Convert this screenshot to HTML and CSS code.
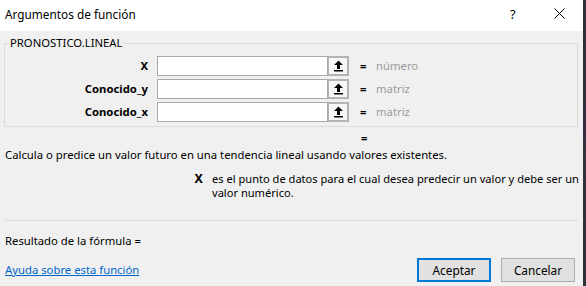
FILE: index.html
```html
<!DOCTYPE html>
<html lang="es">
<head>
<meta charset="utf-8">
<title>Argumentos de función</title>
<link rel="stylesheet" href="styles.css">
</head>
<body>
<div class="screen">
  <div class="dialog">
    <div class="titlebar">
      <span class="title">Argumentos de función</span>
      <span class="help">?</span>
      <span class="close">
        <svg width="11" height="11" viewBox="0 0 11 11"><path d="M0.5 0.5 L10.5 10.5 M10.5 0.5 L0.5 10.5" stroke="#000" stroke-width="1" fill="none"/></svg>
      </span>
    </div>
    <div class="content">
      <fieldset class="group">
        <legend>PRONOSTICO.LINEAL</legend>
        <div class="args">
          <label class="arg-label">X</label>
          <div class="field"><span class="input"></span><span class="pick"><svg width="11" height="12" viewBox="0 0 11 12"><path d="M5.5 0.5 L10 5 L7 5 L7 9 L4 9 L4 5 L1 5 Z" fill="#000"/><rect x="1" y="10" width="9" height="1.5" fill="#000"/></svg></span></div>
          <span class="eq">=</span>
          <span class="val">número</span>

          <label class="arg-label">Conocido_y</label>
          <div class="field"><span class="input"></span><span class="pick"><svg width="11" height="12" viewBox="0 0 11 12"><path d="M5.5 0.5 L10 5 L7 5 L7 9 L4 9 L4 5 L1 5 Z" fill="#000"/><rect x="1" y="10" width="9" height="1.5" fill="#000"/></svg></span></div>
          <span class="eq">=</span>
          <span class="val">matriz</span>

          <label class="arg-label">Conocido_x</label>
          <div class="field"><span class="input"></span><span class="pick"><svg width="11" height="12" viewBox="0 0 11 12"><path d="M5.5 0.5 L10 5 L7 5 L7 9 L4 9 L4 5 L1 5 Z" fill="#000"/><rect x="1" y="10" width="9" height="1.5" fill="#000"/></svg></span></div>
          <span class="eq">=</span>
          <span class="val">matriz</span>
        </div>
      </fieldset>
      <div class="result-eq">=</div>
      <p class="desc">Calcula o predice un valor futuro en una tendencia lineal usando valores existentes.</p>
      <div class="argdesc">
        <b class="argname">X</b>
        <span class="argtext">es el punto de datos para el cual desea predecir un valor y debe ser un<br>valor numérico.</span>
      </div>
      <div class="sep"></div>
      <div class="result">Resultado de la fórmula =</div>
      <div class="footer">
        <a class="help-link" href="#">Ayuda sobre esta función</a>
        <div class="buttons">
          <button class="btn primary">Aceptar</button>
          <button class="btn">Cancelar</button>
        </div>
      </div>
    </div>
  </div>
  <div class="backdrop"></div>
</div>
</body>
</html>
```
FILE: styles.css
```css
html, body {
  margin: 0;
  padding: 0;
}
body {
  width: 586px;
  height: 286px;
  overflow: hidden;
  font-family: "Noto Sans", "Liberation Sans", sans-serif;
  font-size: 11.3px;
  color: #000;
}
.screen {
  display: flex;
  width: 586px;
  height: 286px;
}
.dialog {
  width: 583px;
  height: 286px;
  background: #f0f0f0;
  display: flex;
  flex-direction: column;
}
.backdrop {
  width: 3px;
  height: 286px;
  background: linear-gradient(#2e3238 0, #2e3238 30%, #3b2a45 45%, #30343a 55%, #2c3036 100%);
}
.titlebar {
  height: 31px;
  background: #fff;
  display: flex;
  align-items: center;
  padding-left: 5px;
  box-sizing: border-box;
}
.title {
  font-size: 11.8px;
  line-height: 14px;
  margin-top: -3px;
  flex: 1;
}
.help {
  font-size: 13px;
  width: 12px;
  margin-top: -3px;
  margin-right: 32px;
}
.close {
  display: flex;
  margin-right: 18px;
  margin-top: -4px;
}
.content {
  padding: 0 5px 0 5px;
  display: flex;
  flex-direction: column;
}
.group {
  margin: 5px 0 0 -1px;
  padding: 6px 0 4px 0;
  border: 1px solid #dcdcdc;
  min-width: 0;
}
.group legend {
  padding: 0 1px;
  margin-left: 4px;
  line-height: 14px;
}
.args {
  display: grid;
  grid-template-columns: 152px 192px 27px auto;
  grid-auto-rows: 20px;
  row-gap: 3px;
  column-gap: 0;
  align-items: center;
}
.arg-label {
  font-weight: bold;
  text-align: right;
  padding-right: 9px;
  line-height: 14px;
}
.field {
  display: flex;
  height: 20px;
}
.input {
  width: 171px;
  height: 20px;
  box-sizing: border-box;
  border: 1px solid #a9a9a9;
  background: #fff;
}
.pick {
  width: 21px;
  height: 20px;
  box-sizing: border-box;
  border: 2px solid #b3b3b3;
  border-left-width: 1px;
  background: #f7f7f7;
  display: flex;
  align-items: center;
  justify-content: center;
}
.eq {
  padding-left: 11px;
  font-weight: bold;
  line-height: 14px;
}
.val {
  color: #9c9c9c;
  line-height: 14px;
}
.result-eq {
  margin-top: 4px;
  padding-left: 356px;
  line-height: 14px;
  font-weight: bold;
}
.desc {
  margin: 3px 0 0 0;
  line-height: 14px;
}
.argdesc {
  margin-top: 10px;
  display: flex;
  line-height: 14px;
}
.argname {
  width: 207px;
  flex: none;
  text-align: right;
  padding-right: 9px;
  box-sizing: border-box;
  font-size: 12.5px;
}
.argtext {
  flex: 1;
  white-space: nowrap;
  font-size: 11.1px;
}
.sep {
  margin-top: 20px;
  height: 1px;
  background: #d9d9d9;
}
.result {
  margin-top: 13px;
  line-height: 14px;
}
.footer {
  margin-top: 10px;
  display: flex;
  align-items: center;
  justify-content: space-between;
}
.help-link {
  color: #0066cc;
  text-decoration: underline;
  line-height: 14px;
}
.buttons {
  display: flex;
  gap: 10px;
  margin-right: 3px;
}
.btn {
  width: 74px;
  height: 24px;
  box-sizing: border-box;
  border: 1px solid #adadad;
  background: #e1e1e1;
  font-family: inherit;
  font-size: 11.8px;
  color: #000;
  padding: 0;
}
.btn.primary {
  border: 2px solid #0078d7;
}
```
